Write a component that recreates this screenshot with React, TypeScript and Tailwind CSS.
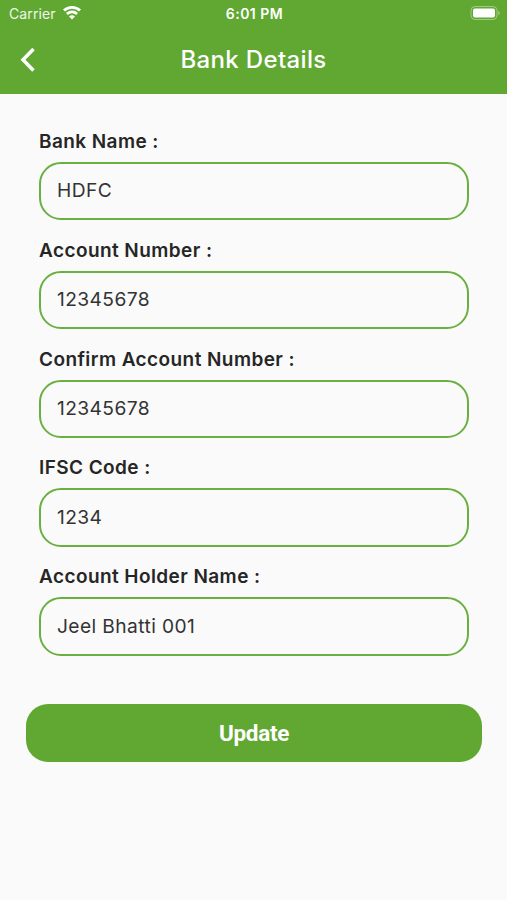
import { useState } from "react";

const initialFields = [
  { id: "bank", label: "Bank Name :", value: "HDFC" },
  { id: "account", label: "Account Number :", value: "12345678" },
  { id: "confirm", label: "Confirm Account Number :", value: "12345678" },
  { id: "ifsc", label: "IFSC Code :", value: "1234" },
  { id: "holder", label: "Account Holder Name :", value: "Jeel Bhatti 001" },
];

function StatusBar() {
  return (
    <div className="grid h-[26px] grid-cols-[1fr_auto_1fr] items-center pl-[9px] pr-[7px] text-white">
      <div className="flex items-center gap-[7px]">
        <span className="text-[14px] tracking-[0.1px] text-white/90">Carrier</span>
        <svg width="18" height="14" viewBox="0 0 18 14" fill="currentColor">
          <path d="M9 0C5.6 0 2.4 1.3 0 3.6l1.9 2a10.2 10.2 0 0 1 14.2 0l1.900-2A13 13 0 0 0 9 0Z" />
          <path d="M9 4.600c-2.300 0-4.400.9-6 2.400l1.900 2a5.900 5.900 0 0 1 8.200 0L15 7a8.700 8.700 0 0 0-6-2.400Z" />
          <path d="M9 9.200c-1.100 0-2.200.4-3 1.200l3 3.200 3-3.200c-.8-.8-1.900-1.200-3-1.200Z" />
        </svg>
      </div>
      <span className="text-[14px] font-semibold tracking-[0.5px]">6:01 PM</span>
      <svg
        className="justify-self-end"
        width="30"
        height="14"
        viewBox="0 0 30 14"
        fill="none"
      >
        <rect x="1" y="0.500" width="26" height="13" rx="4" stroke="white" strokeOpacity="0.400" />
        <rect x="3" y="2.500" width="22" height="9" rx="2" fill="white" />
        <path d="M28.300 4.800v4.400c1-.4 1.500-1.300 1.500-2.200s-.5-1.800-1.500-2.200Z" fill="white" fillOpacity="0.400" />
      </svg>
    </div>
  );
}

function App() {
  const [fields, setFields] = useState(initialFields);

  function changeField(id: string, value: string) {
    setFields(fields.map((f) => (f.id === id ? { ...f, value } : f)));
  }

  return (
    <div className="h-[900px] bg-[#fafafa] font-['Inter',sans-serif]">
      <header className="h-[94px] bg-[#60a832]">
        <StatusBar />
        <div className="grid h-[68px] grid-cols-[56px_1fr_56px] items-center text-white">
          <button type="button" aria-label="Back" className="pl-5">
            <svg width="16" height="26" viewBox="0 0 16 26" fill="none">
              <path d="M13.500 2 3 12.700l10.500 10.700" stroke="currentColor" strokeWidth="3.500" />
            </svg>
          </button>
          <h1 className="text-center text-[24px] font-medium tracking-[0.35px]">
            Bank Details
          </h1>
        </div>
      </header>

      <form className="pl-[26px] pr-[25px] pt-[34px]">
        <div className="flex flex-col px-[13px]">
          {fields.map((field) => (
            <div key={field.id} className="h-[108.800px]">
              <label
                htmlFor={field.id}
                className="block h-[34px] text-[19px] font-semibold leading-[28px] tracking-[0.42px] text-[#262626]"
              >
                {field.label}
              </label>
              <input
                id={field.id}
                value={field.value}
                onChange={(e) => changeField(field.id, e.target.value)}
                className="block h-[58.400px] w-full rounded-[22px] border-2 border-[#6ab040] px-4 pb-[1.500px] text-[19.200px] tracking-[0.4px] text-[#333333] outline-none"
              />
            </div>
          ))}
        </div>
        <button
          type="button"
          className="mt-8 h-[58px] w-full rounded-[22px] bg-[#60a832] pt-0.5 font-['Roboto',sans-serif] text-[22.500px] font-bold tracking-[-0.3px] text-white"
        >
          Update
        </button>
      </form>
    </div>
  );
}

export default App;
